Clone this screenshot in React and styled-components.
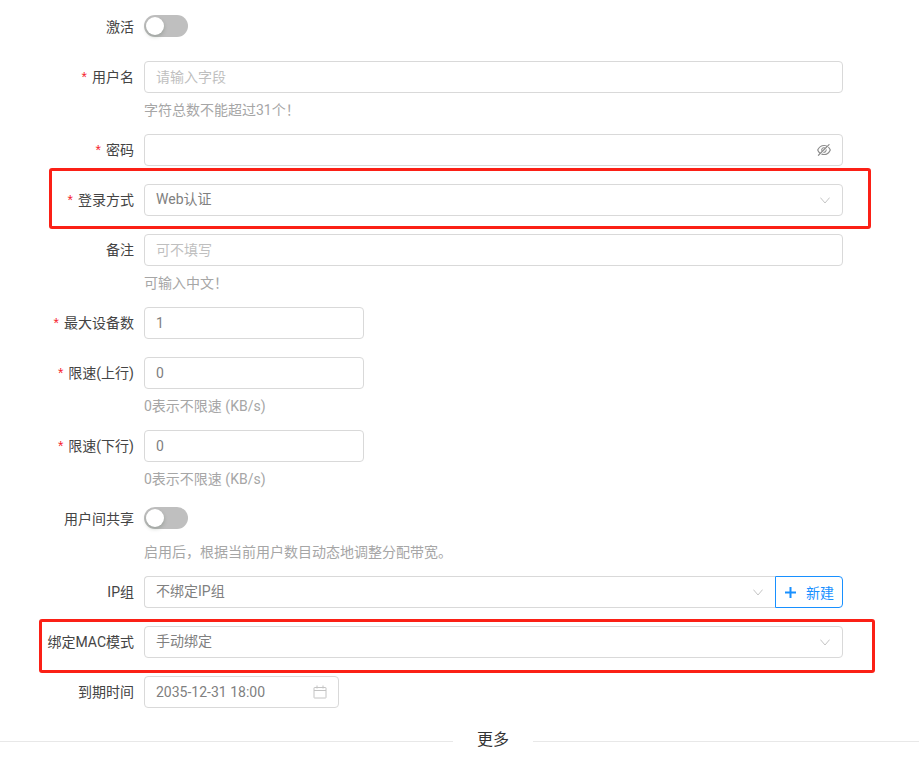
import React from "react";
import styled, { createGlobalStyle } from "styled-components";
import { AiOutlineEyeInvisible } from "react-icons/ai";

const Global = createGlobalStyle`
  html, body { margin: 0; padding: 0; background: #fff; }
  body { font-family: Roboto, "Noto Sans CJK SC", sans-serif; font-size: 14px; color: #444; }
  * { box-sizing: border-box; }
`;

const Page = styled.div`
  position: relative;
  width: 919px;
  height: 771px;
  padding-top: 11px;
  overflow: hidden;
`;

const Row = styled.div`
  display: grid;
  grid-template-columns: 134px 699px;
  column-gap: 10px;
  margin-bottom: 18px;
`;

const Label = styled.label`
  height: 32px;
  line-height: 32px;
  text-align: right;
  color: #444;
  white-space: nowrap;
`;

const Star = styled.span`
  color: #f5222d;
  margin-right: 5px;
  font-family: "Liberation Sans", sans-serif;
`;

const Control = styled.div`
  display: flex;
  flex-direction: column;
  min-width: 0;
`;

const Help = styled.div`
  height: 23px;
  padding-top: 7px;
  line-height: 20px;
  color: #a6a6a6;
  white-space: nowrap;
`;

const Field = styled.div`
  display: flex;
  align-items: center;
  height: 32px;
  width: ${(p) => p.$w || "100%"};
  flex: ${(p) => (p.$grow ? "1" : "none")};
  padding: 0 11px;
  background: #fff;
  border: 1px solid #d9d9d9;
  border-radius: ${(p) => (p.$joined ? "4px 0 0 4px" : "4px")};
  border-right-width: ${(p) => (p.$joined ? "0" : "1px")};
`;

const Value = styled.input`
  flex: 1;
  min-width: 0;
  height: 100%;
  padding: 0;
  border: 0;
  outline: 0;
  background: transparent;
  font: inherit;
  color: #808080;
  &::placeholder { color: #bfbfbf; opacity: 1; }
`;

const Selected = styled.span`
  flex: 1;
  min-width: 0;
  line-height: 28px;
  height: 30px;
  color: #808080;
  white-space: nowrap;
`;

const Suffix = styled.span`
  display: flex;
  align-items: center;
  margin-right: ${(p) => p.$mr || 0}px;
  color: ${(p) => p.$c || "#c4c4c4"};
  font-size: ${(p) => p.$s || 14}px;
`;

const SwitchRow = styled.div`
  display: flex;
  align-items: center;
  height: 32px;
  padding-bottom: 2px;
`;

const Switch = styled.div`
  position: relative;
  width: 44px;
  height: 22px;
  border-radius: 11px;
  background: #bfbfbf;
`;

const Knob = styled.span`
  position: absolute;
  top: 2px;
  left: 2px;
  width: 18px;
  height: 18px;
  border-radius: 50%;
  background: #fff;
  box-shadow: 0 2px 4px rgba(0, 35, 11, 0.2);
`;

const Group = styled.div`
  display: flex;
`;

const AddButton = styled.button`
  display: flex;
  align-items: center;
  justify-content: center;
  gap: 10px;
  width: 68px;
  height: 32px;
  padding: 0 0 0 1px;
  background: #fff;
  border: 1px solid #1890ff;
  border-radius: 0 4px 4px 0;
  color: #1890ff;
  font: inherit;
`;

const Divider = styled.div`
  display: flex;
  align-items: center;
  margin-top: 20px;
  color: #333;
  font-size: 16px;
  &::before, &::after { content: ""; height: 1px; background: #e8e8e8; }
  &::before { width: 453px; }
  &::after { flex: 1; }
`;

const DividerText = styled.span`
  width: 80px;
  text-align: center;
  line-height: 24px;
  padding-bottom: 2px;
`;

const Highlight = styled.div`
  position: absolute;
  left: ${(p) => p.$x}px;
  top: ${(p) => p.$y}px;
  width: ${(p) => p.$w}px;
  height: ${(p) => p.$h}px;
  border: 3px solid #fb2016;
  border-radius: 3px;
  pointer-events: none;
`;

const Item = ({ label, required, help, children }) => (
  <Row>
    <Label>{required && <Star>*</Star>}{label}</Label>
    <Control>
      {children}
      {help && <Help>{help}</Help>}
    </Control>
  </Row>
);

const Toggle = () => <SwitchRow><Switch><Knob /></Switch></SwitchRow>;

const Chevron = () => (
  <svg width="10" height="7" viewBox="0 0 10 7" fill="none" stroke="#c4c4c4" strokeWidth="1">
    <path d="M0.4 0.6L5 6L9.6 0.6" />
  </svg>
);

const Select = ({ value, ...rest }) => (
  <Field {...rest}>
    <Selected>{value}</Selected>
    <Suffix $mr={1}><Chevron /></Suffix>
  </Field>
);

const CalendarIcon = () => (
  <svg width="14" height="14" viewBox="0 0 14 14" fill="none" stroke="#c4c4c4" strokeWidth="1">
    <rect x="1" y="2.5" width="12" height="10.5" rx="0.5" />
    <path d="M1 5.5h12M4 0.5v3M10 0.5v3" />
  </svg>
);

const PlusIcon = () => (
  <svg width="11" height="11" viewBox="0 0 11 11" fill="none" stroke="currentColor" strokeWidth="2">
    <path d="M5.5 0v11M0 5.5h11" />
  </svg>
);

export default function App() {
  return (
    <Page>
      <Global />
      <Item label="激活"><Toggle /></Item>
      <Item label="用户名" required help="字符总数不能超过31个！">
        <Field><Value placeholder="请输入字段" readOnly /></Field>
      </Item>
      <Item label="密码" required>
        <Field>
          <Value readOnly />
          <Suffix $c="#8c8c8c" $s={16} $mr={-1}><AiOutlineEyeInvisible /></Suffix>
        </Field>
      </Item>
      <Item label="登录方式" required><Select value="Web认证" /></Item>
      <Item label="备注" help="可输入中文！">
        <Field><Value placeholder="可不填写" readOnly /></Field>
      </Item>
      <Item label="最大设备数" required>
        <Field $w="220px"><Value readOnly value="1" /></Field>
      </Item>
      <Item label="限速(上行)" required help="0表示不限速 (KB/s)">
        <Field $w="220px"><Value readOnly value="0" /></Field>
      </Item>
      <Item label="限速(下行)" required help="0表示不限速 (KB/s)">
        <Field $w="220px"><Value readOnly value="0" /></Field>
      </Item>
      <Item label="用户间共享" help="启用后，根据当前用户数目动态地调整分配带宽。"><Toggle /></Item>
      <Item label="IP组">
        <Group>
          <Select value="不绑定IP组" $grow $joined />
          <AddButton><PlusIcon />新建</AddButton>
        </Group>
      </Item>
      <Item label="绑定MAC模式"><Select value="手动绑定" /></Item>
      <Item label="到期时间">
        <Field $w="195px">
          <Value readOnly value="2035-12-31 18:00" />
          <Suffix><CalendarIcon /></Suffix>
        </Field>
      </Item>
      <Divider><DividerText>更多</DividerText></Divider>
      <Highlight $x={49} $y={168} $w={822} $h={61} />
      <Highlight $x={39} $y={619} $w={836} $h={54} />
    </Page>
  );
}
